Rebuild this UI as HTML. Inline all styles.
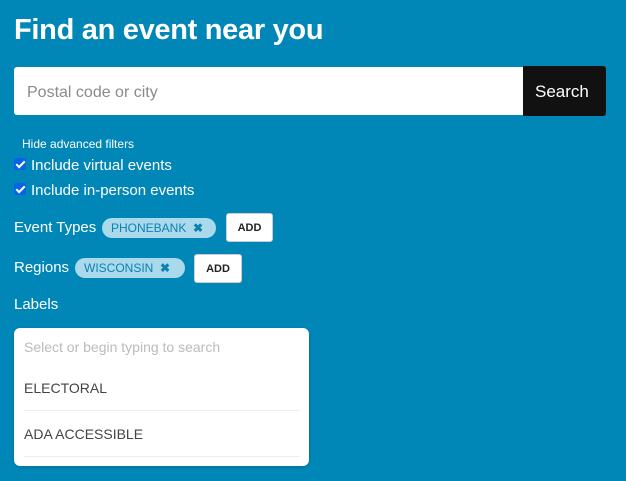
<!DOCTYPE html>
<html><head><style>
*{margin:0;padding:0;box-sizing:border-box}
body{width:626px;height:481px;background:#0087b8;font-family:"Liberation Sans",sans-serif;color:#fff;position:relative;overflow:hidden}
.a{position:absolute;white-space:nowrap}
h1{position:absolute;left:14px;top:14px;font-size:29px;font-weight:bold;letter-spacing:-0.3px}
.inp{left:14px;top:67px;width:510px;height:48px;background:#fff;border-radius:3px 0 0 3px;color:#8a8a8a;font-size:16px;padding:17px 0 0 13px}
.btn{left:523px;top:66px;width:83px;height:50px;background:#111;border-radius:0 3px 3px 0;font-size:17px;padding:16px 0 0 12px}
.cb{width:12px;height:12px;background:#0a63e6;border-radius:2px;display:inline-block;position:relative}
.cb:after{content:"";position:absolute;left:4px;top:1px;width:3px;height:7px;border:solid #fff;border-width:0 2px 2px 0;transform:rotate(45deg)}
.pill{background:#a9d9eb;color:#0b82b0;border-radius:10px;height:20px;font-size:12px;padding:3px 0 0 9px}
.add{background:#fff;color:#222;border:1px solid #ccc;border-radius:3px;font-size:11px;font-weight:bold;text-align:center;padding-top:8px}
.dd{left:14px;top:328px;width:295px;height:138px;background:#fff;border-radius:6px;box-shadow:0 1px 3px rgba(0,0,0,.2)}
.dd div{position:absolute;left:10px;font-size:14px;color:#444}
.ln{position:absolute;left:10px;width:276px;height:1px;background:#eee}
</style></head><body>
<h1>Find an event near you</h1>
<div class="a inp">Postal code or city</div>
<div class="a btn">Search</div>
<div class="a" style="left:22px;top:137px;font-size:12px">Hide advanced filters</div>
<div class="a" style="left:14px;top:157px"><span class="cb"></span></div>
<div class="a" style="left:31px;top:157px;font-size:15px">Include virtual events</div>
<div class="a" style="left:14px;top:182px"><span class="cb"></span></div>
<div class="a" style="left:31px;top:182px;font-size:15px">Include in-person events</div>
<div class="a" style="left:14px;top:219px;font-size:15px">Event Types</div>
<div class="a pill" style="left:102px;top:218px;width:114px">PHONEBANK &nbsp;<b>✖</b></div>
<div class="a add" style="left:226px;top:213px;width:47px;height:29px">ADD</div>
<div class="a" style="left:14px;top:259px;font-size:15px">Regions</div>
<div class="a pill" style="left:75px;top:258px;width:110px">WISCONSIN &nbsp;<b>✖</b></div>
<div class="a add" style="left:194px;top:254px;width:48px;height:29px">ADD</div>
<div class="a" style="left:14px;top:296px;font-size:15px">Labels</div>
<div class="a dd">
<div style="top:11px;color:#bbb">Select or begin typing to search</div>
<div style="top:52px">ELECTORAL</div>
<span class="ln" style="top:82px"></span>
<div style="top:98px">ADA ACCESSIBLE</div>
<span class="ln" style="top:128px"></span>
</div>
</body></html>
